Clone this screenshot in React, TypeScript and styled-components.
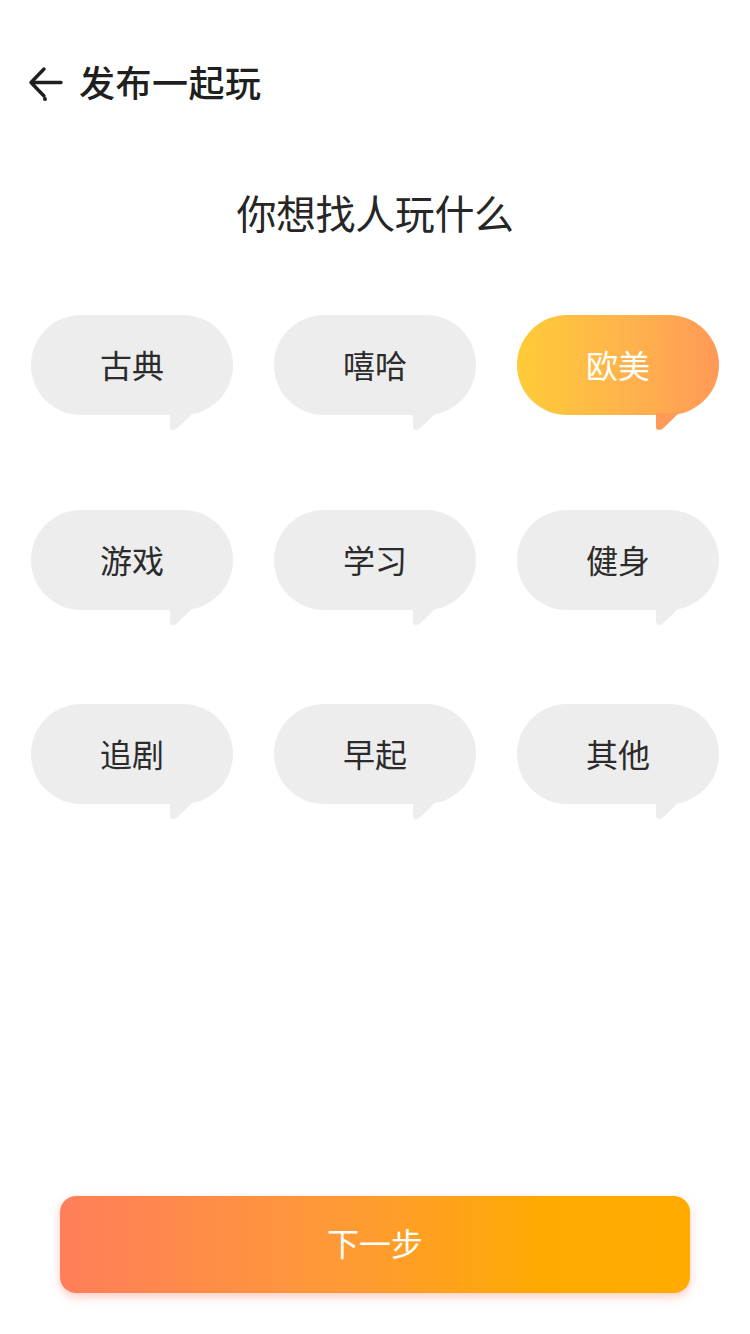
import React, { useState } from 'react';
import styled, { createGlobalStyle } from 'styled-components';

const GlobalStyle = createGlobalStyle`
  html, body {
    margin: 0;
    padding: 0;
    background: #fff;
  }
  body {
    font-family: 'Noto Sans', 'Noto Sans CJK SC', sans-serif;
  }
`;

const TAGS = ['古典', '嘻哈', '欧美', '游戏', '学习', '健身', '追剧', '早起', '其他'];

const App = () => {
  const [selected, setSelected] = useState('欧美');

  return (
    <>
      <GlobalStyle />
      <PageWrap>
        <Header>
          <BackButton aria-label="返回">
            <svg width="36" height="36" viewBox="0 0 36 36" fill="none">
              <path
                d="M34 16.5H5M17 3L4 16.5L17 30"
                stroke="#1f1f1f"
                strokeWidth="3.4"
                strokeLinecap="round"
                strokeLinejoin="round"
              />
              <circle cx="18" cy="33" r="2" fill="#1f1f1f" />
            </svg>
          </BackButton>
          <HeaderTitle>发布一起玩</HeaderTitle>
        </Header>

        <Heading>你想找人玩什么</Heading>

        <TagGrid>
          {TAGS.map((tag) => {
            const active = tag === selected;
            return (
              <TagItem key={tag} onClick={() => setSelected(tag)}>
                <TagBubble $active={active}>{tag}</TagBubble>
                <TagTail width="24" height="18" viewBox="0 0 24 18">
                  <path
                    d="M0 0H23L8 14.5Q5.5 17 3 17Q0 17 0 14Z"
                    fill={active ? '#ff9b56' : '#ededed'}
                  />
                </TagTail>
              </TagItem>
            );
          })}
        </TagGrid>

        <Footer>
          <NextButton>下一步</NextButton>
        </Footer>
      </PageWrap>
    </>
  );
};

export default App;

const PageWrap = styled.div`
  display: flex;
  flex-direction: column;
  min-height: 1334px;
  box-sizing: border-box;
  padding-bottom: 41px;
`;

const Header = styled.header`
  display: flex;
  align-items: center;
  gap: 16px;
  height: 46px;
  padding: 58px 0 0 27px;
`;

const BackButton = styled.button`
  display: flex;
  align-items: center;
  justify-content: center;
  padding: 0;
  margin: 6px 0 0;
  border: 0;
  background: none;
  width: 36px;
  height: 36px;
`;

const HeaderTitle = styled.h1`
  margin: 0;
  font-size: 36px;
  font-weight: 500;
  color: #1f1f1f;
  letter-spacing: 0.5px;
`;

const Heading = styled.h2`
  margin: 82px 0 0;
  text-align: center;
  font-size: 40px;
  line-height: 56px;
  font-weight: 400;
  color: #262626;
  letter-spacing: -0.4px;
`;

const TagGrid = styled.div`
  display: grid;
  grid-template-columns: repeat(3, 202px);
  column-gap: 41px;
  row-gap: 78.5px;
  justify-content: center;
  margin-top: 73px;
`;

const TagItem = styled.div`
  position: relative;
  display: flex;
  flex-direction: column;
  height: 116px;
  cursor: pointer;
`;

const TagBubble = styled.div<{ $active: boolean }>`
  display: flex;
  align-items: center;
  justify-content: center;
  height: 100px;
  border-radius: 50px;
  background: ${(p) =>
    p.$active ? 'linear-gradient(90deg, #ffcb37 0%, #ffb34c 55%, #ff9957 100%)' : '#ededed'};
  color: ${(p) => (p.$active ? '#fff' : '#2b2b2b')};
  font-size: 32px;
  padding-bottom: 2px;
  box-sizing: border-box;
`;

const TagTail = styled.svg`
  position: absolute;
  left: 139px;
  top: 98px;
`;

const Footer = styled.div`
  margin-top: auto;
  display: flex;
  justify-content: center;
`;

const NextButton = styled.button`
  width: 630px;
  height: 97px;
  padding: 0 0 5px;
  border: 0;
  border-radius: 16px;
  background: linear-gradient(90deg, #ff7e5a 0%, #ff9a36 45%, #ffaa00 78%, #ffab00 100%);
  box-shadow: 0 4px 10px rgba(255, 110, 80, 0.35);
  color: #fff;
  font-family: 'Noto Sans', 'Noto Sans CJK SC', sans-serif;
  font-size: 32px;
  font-weight: 400;
`;
